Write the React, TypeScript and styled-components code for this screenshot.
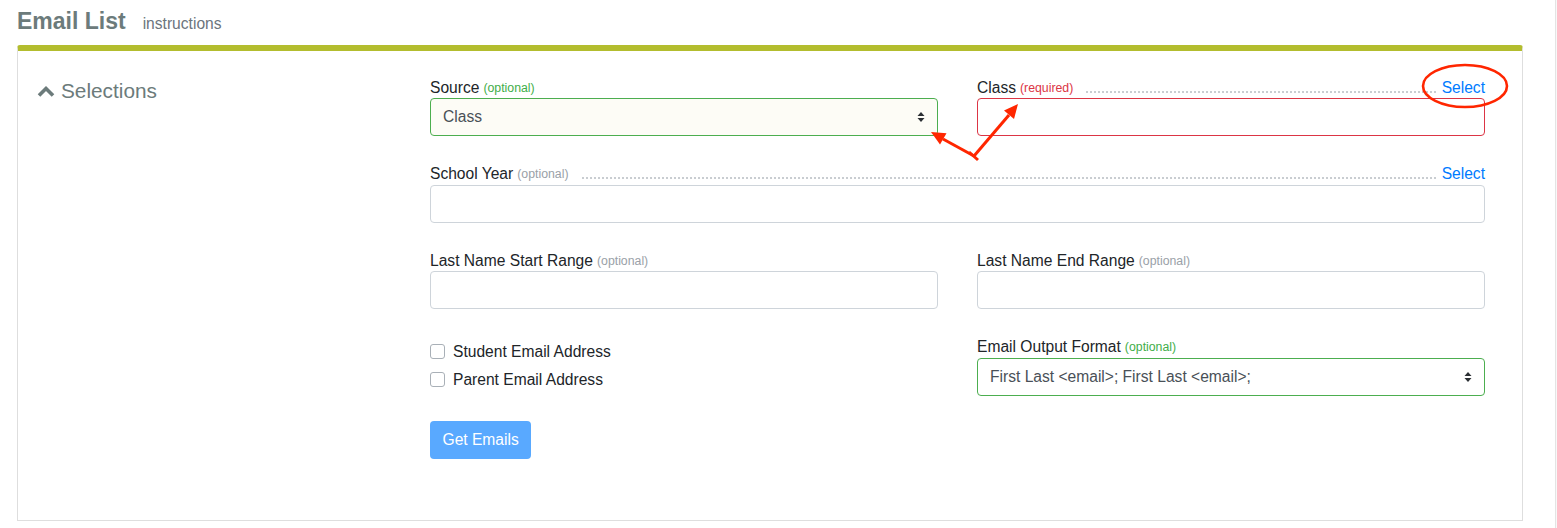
import React from "react";
import styled, { createGlobalStyle } from "styled-components";

const GlobalStyle = createGlobalStyle`
  html, body { margin: 0; padding: 0; background: #ffffff; }
  body { font-family: "Liberation Sans", Arial, Helvetica, sans-serif; color: #212529; }
  * { box-sizing: border-box; }
`;

const Shell = styled.div`
  position: relative;
  display: flex;
  width: 1557px;
  height: 528px;
  overflow: hidden;
`;

const Page = styled.div`
  flex: 1;
  padding: 7px 32px 0 17px;
`;

const Gutter = styled.div`
  width: 2px;
  border-left: 1px solid #e4e4e4;
  background: #f8f8f8;
`;

const Header = styled.div`
  display: flex;
  align-items: baseline;
  gap: 17px;
  height: 28px;
  margin-bottom: 10px;
`;

const Title = styled.h1`
  margin: 0;
  font-size: 23px;
  line-height: 28px;
  font-weight: 700;
  color: #6c7b7b;
`;

const SubLink = styled.span`
  font-size: 15.6px;
  color: #6c757d;
`;

const Card = styled.div`
  border: 1px solid #dedede;
  border-top: 6px solid #b3bd2e;
  border-radius: 3px 3px 0 0;
  height: 476px;
  display: grid;
  grid-template-columns: 412px 1055px;
  padding-top: 24px;
`;

const SideHead = styled.div`
  padding: 3px 0 0 19px;
  display: flex;
  align-items: center;
  gap: 6px;
  height: 29px;
  font-size: 20.8px;
  color: #6c7b7b;
`;

const Form = styled.div`
  display: grid;
  grid-template-columns: 1fr 1fr;
  column-gap: 39px;
  row-gap: 25.5px;
  align-content: start;
`;

const Group = styled.div<{ $span?: boolean }>`
  grid-column: ${(p) => (p.$span ? "1 / span 2" : "auto")};
  display: flex;
  flex-direction: column;
`;

const LabelRow = styled.div`
  display: flex;
  align-items: center;
  height: 23px;
  padding-top: 2px;
  font-size: 15.6px;
  white-space: nowrap;
`;

const Hint = styled.span<{ $tone: "ok" | "bad" | "muted" }>`
  margin-left: 4px;
  font-size: 12.3px;
  color: ${(p) => (p.$tone === "ok" ? "#3fae49" : p.$tone === "bad" ? "#dc3545" : "#9aa1a8")};
`;

const Leader = styled.div`
  flex: 1;
  height: 2px;
  margin: 8px 4px 0 13px;
  background-image: linear-gradient(to right, #c9cdd1 0 2px, transparent 2px 4px);
  background-size: 4px 2px;
  background-repeat: repeat-x;
`;

const SelectLink = styled.a`
  color: #007bff;
  text-decoration: none;
  font-size: 15.6px;
`;

const Field = styled.div<{ $tone?: "ok" | "bad"; $fill?: boolean }>`
  height: 38px;
  display: flex;
  align-items: center;
  justify-content: space-between;
  padding: 0 12px;
  border: 1px solid
    ${(p) => (p.$tone === "ok" ? "#4cae4f" : p.$tone === "bad" ? "#dc3545" : "#ced4da")};
  border-radius: 4px;
  background: ${(p) => (p.$fill ? "#fdfcf6" : "#ffffff")};
  font-size: 15.6px;
  color: #495057;
`;

const Checks = styled.div`
  padding-top: 3px;
  display: flex;
  flex-direction: column;
`;

const CheckRow = styled.label`
  display: flex;
  align-items: center;
  gap: 8px;
  height: 28px;
  font-size: 15.6px;
  color: #212529;
`;

const Box = styled.span`
  width: 15px;
  height: 15px;
  border: 1px solid #a9b0b7;
  border-radius: 3px;
  background: #fff;
`;

const Button = styled.button`
  grid-column: 1;
  justify-self: start;
  height: 38px;
  padding: 0 12.5px;
  border: none;
  border-radius: 4px;
  background: #59a9ff;
  color: #fff;
  font-family: inherit;
  font-size: 15.6px;
`;

const Overlay = styled.svg`
  position: absolute;
  left: 0;
  top: 0;
  pointer-events: none;
`;

const Arrows = () => (
  <svg width="8" height="12" viewBox="0 0 8 12">
    <polygon points="0.5,5 4,1 7.5,5" fill="#2b2f33" />
    <polygon points="0.5,7 4,11 7.5,7" fill="#2b2f33" />
  </svg>
);

const Chevron = () => (
  <svg width="18" height="12" viewBox="0 0 18 12">
    <polyline points="2,10.5 9,3.5 16,10.5" fill="none" stroke="#6c7b7b" strokeWidth="3.6" />
  </svg>
);

export default function App() {
  return (
    <>
      <GlobalStyle />
      <Shell>
        <Page>
          <Header>
            <Title>Email List</Title>
            <SubLink>instructions</SubLink>
          </Header>
          <Card>
            <SideHead>
              <Chevron />
              Selections
            </SideHead>
            <Form>
              <Group>
                <LabelRow>
                  Source<Hint $tone="ok">(optional)</Hint>
                </LabelRow>
                <Field $tone="ok" $fill>
                  Class
                  <Arrows />
                </Field>
              </Group>
              <Group>
                <LabelRow>
                  Class<Hint $tone="bad">(required)</Hint>
                  <Leader />
                  <SelectLink>Select</SelectLink>
                </LabelRow>
                <Field $tone="bad" />
              </Group>
              <Group $span>
                <LabelRow>
                  School Year<Hint $tone="muted">(optional)</Hint>
                  <Leader />
                  <SelectLink>Select</SelectLink>
                </LabelRow>
                <Field />
              </Group>
              <Group>
                <LabelRow>
                  Last Name Start Range<Hint $tone="muted">(optional)</Hint>
                </LabelRow>
                <Field />
              </Group>
              <Group>
                <LabelRow>
                  Last Name End Range<Hint $tone="muted">(optional)</Hint>
                </LabelRow>
                <Field />
              </Group>
              <Checks>
                <CheckRow>
                  <Box />
                  Student Email Address
                </CheckRow>
                <CheckRow>
                  <Box />
                  Parent Email Address
                </CheckRow>
              </Checks>
              <Group>
                <LabelRow>
                  Email Output Format<Hint $tone="ok">(optional)</Hint>
                </LabelRow>
                <Field $tone="ok">
                  First Last &lt;email&gt;; First Last &lt;email&gt;;
                  <Arrows />
                </Field>
              </Group>
              <Button>Get Emails</Button>
            </Form>
          </Card>
        </Page>
        <Gutter />
        <Overlay width="1557" height="528" viewBox="0 0 1557 528">
          <g stroke="#ff2600" strokeWidth="3" fill="none">
            <line x1="974" y1="156" x2="943" y2="139" />
            <line x1="974" y1="156" x2="1009" y2="115" />
            <line x1="969" y1="152" x2="978" y2="160" />
            <ellipse cx="1465" cy="86" rx="42" ry="21" strokeWidth="2.6" />
          </g>
          <polygon points="931,132 946.5,133.2 940,144.4" fill="#ff2600" />
          <polygon points="1018,104 1014,119 1004,110.5" fill="#ff2600" />
        </Overlay>
      </Shell>
    </>
  );
}
